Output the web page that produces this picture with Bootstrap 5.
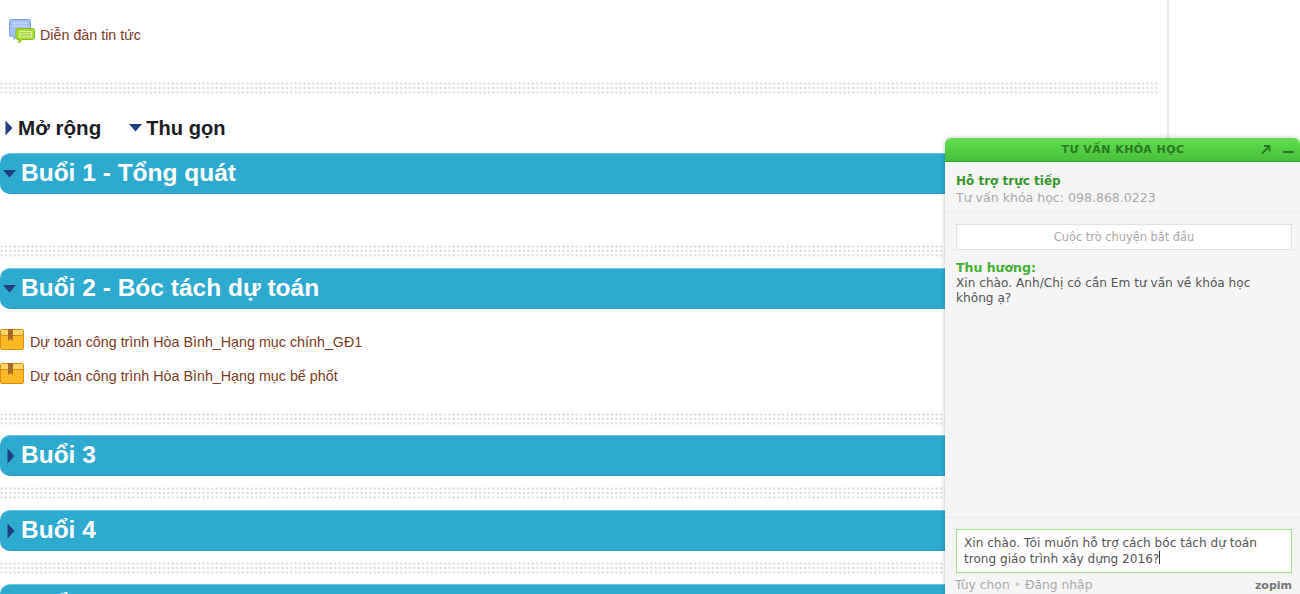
<!DOCTYPE html>
<html lang="vi">
<head>
<meta charset="UTF-8">
<title>Khóa học</title>
<link href="https://cdn.jsdelivr.net/npm/bootstrap@5.3.2/dist/css/bootstrap.min.css" rel="stylesheet">
<style>
html, body { height: 594px; overflow: hidden; }
body { font-family: "Liberation Sans", Arial, sans-serif; background: #fff; }
.page-main { width: 1169px; height: 594px; border-right: 2px solid #e8e8e8; padding-right: 9px; overflow: hidden; }
.res-link { color: #7c3a26; font-size: 14.3px; line-height: 20px; text-decoration: none; }
.forum-row { height: 82px; padding: 18px 0 0 9px; }
.forum-link { margin: 7px 0 0 5px; }
.dots { height: 12px; background-image: radial-gradient(circle at 1.5px 1.5px, #dcdcdc 1px, transparent 1.3px); background-size: 4.4px 4.4px; }
.toggle-row { height: 59px; padding-top: 9px; padding-left: 5px; gap: 28px; }
.toggle-item { font-size: 20.6px; font-weight: 700; color: #1c1c24; line-height: 24px; gap: 5px; }
.toggle-row > .toggle-item + .toggle-item { gap: 4px; font-size: 20.1px; }
.sec-bar { height: 41px; background: #2eaad1; border-top: 1px solid #6cc3de; border-bottom: 1px solid #2a9fc6; border-radius: 10px 0 0 10px; color: #fff; font-size: 24.5px; font-weight: 700; line-height: 38px; padding-left: 3px; gap: 5px; }
.gap-51 { height: 51px; }
.gap-11 { height: 11px; }
.gap-10 { height: 10px; }
.res-list { height: 104px; padding-top: 16px; }
.res-item { height: 34px; gap: 6px; }
.res-item svg { margin-top: -6px; }
.arrow-slot { width: 13px; flex-shrink: 0; }
.chat-box { position: absolute; left: 945px; top: 138px; width: 355px; height: 470px; background: #f5f5f5; border-top-left-radius: 6px; border-top-right-radius: 6px; box-shadow: 0 0 5px rgba(0,0,0,.25); font-family: "DejaVu Sans", Verdana, sans-serif; font-size: 12.1px; }
.chat-head { height: 24px; background: linear-gradient(#5fdf4e, #48bf3a); border-bottom: 1px solid #3fa833; border-top-left-radius: 6px; border-top-right-radius: 6px; color: #2b7a22; font-size: 11px; font-weight: 700; letter-spacing: .45px; line-height: 24px; padding-left: 1px; }
.chat-icons { position: absolute; right: 6px; top: 6px; gap: 12px; }
.chat-agent { height: 51px; padding: 11px 11px 0; border-bottom: 1px solid #ebebeb; line-height: 17px; }
.agent-name { color: #3a962c; font-weight: 700; font-size: 12px; line-height: 16px; }
.agent-sub { color: #aaa; font-size: 12.55px; }
.chat-log { height: 305px; padding: 11px 8px 0 11px; border-bottom: 1px solid #ebebeb; }
.start-note { height: 26px; background: #fff; border: 1px solid #e2e2e2; text-align: center; color: #aaa; font-size: 11.4px; line-height: 24px; margin-bottom: 10px; }
.msg-from { color: #45b036; font-weight: 700; font-size: 12.5px; line-height: 16px; }
.msg-text { color: #555; font-size: 12.15px; line-height: 15px; padding-right: 22px; }
.chat-input { margin: 11px 8px 0 11px; height: 44px; background: #fff; border: 1px solid #9fe58f; padding: 6px 7px; color: #555; line-height: 15px; }
.caret-mark { display: inline-block; width: 1px; height: 13px; background: #333; vertical-align: -1px; }
.chat-foot { height: 20px; padding: 5px 8px 0 10px; color: #aaa; font-size: 12.3px; line-height: 15px; }
.foot-dot { color: #ccc; padding: 0 4px; }
.zopim-mark { color: #777; font-weight: 700; font-size: 11px; }
</style>
</head>
<body>

<div class="page-main">
    <div class="forum-row d-flex align-items-start">
        <svg width="26" height="26" viewBox="0 0 26 26" class="flex-shrink-0">
            <path d="M2.5 1.5h17a2 2 0 0 1 2 2v13a2 2 0 0 1-2 2H8l-3 3v-3H2.500a2 2 0 0 1-2-2v-13a2 2 0 0 1 2-2z" fill="#a5c0f5" stroke="#7c9fe6"/>
            <path d="M3.5 5h15M3.5 8h15" stroke="#d0def9"/>
            <path d="M9 10.500h14.500a2 2 0 0 1 2 2v7a2 2 0 0 1-2 2H13l-3 3.500v-3.500H9a2 2 0 0 1-2-2v-7a2 2 0 0 1 2-2z" fill="#a9dc2e" stroke="#86bd1c"/>
            <rect x="10" y="13" width="13" height="6.500" fill="#dcf29a"/>
            <path d="M11 14.500h11M11 16.300h11M11 18h11" stroke="#97c72f" stroke-width=".8"/>
        </svg>
        <a href="#" class="res-link forum-link">Diễn đàn tin tức</a>
    </div>
    <div class="dots"></div>

    <div class="toggle-row d-flex">
        <div class="toggle-item d-flex align-items-center">
            <svg width="8" height="16" viewBox="0 0 8 16"><path d="M0.500 0.500 7.500 8 0.500 15.500z" fill="#1f3d7f"/></svg>
            Mở rộng
        </div>
        <div class="toggle-item d-flex align-items-center">
            <svg width="13" height="8" viewBox="0 0 13 8"><path d="M0 0h13L6.500 7.500z" fill="#1f3d7f"/></svg>
            Thu gọn
        </div>
    </div>

    <div class="sec-bar d-flex">
        <span class="arrow-slot d-flex align-items-center"><svg width="13" height="8" viewBox="0 0 13 8"><path d="M0 0h13L6.500 7.500z" fill="#1f3d7f"/></svg></span>
        Buổi 1 - Tổng quát
    </div>
    <div class="gap-51"></div>
    <div class="dots"></div>
    <div class="gap-11"></div>

    <div class="sec-bar d-flex">
        <span class="arrow-slot d-flex align-items-center"><svg width="13" height="8" viewBox="0 0 13 8"><path d="M0 0h13L6.500 7.500z" fill="#1f3d7f"/></svg></span>
        Buổi 2 - Bóc tách dự toán
    </div>
    <div class="res-list">
        <div class="res-item d-flex align-items-center">
            <svg width="24" height="21" viewBox="0 0 24 21"><rect x=".5" y=".5" width="23" height="20" rx="1.500" fill="#fbb924" stroke="#d98e10"/><path d="M1 1h22v5H1z" fill="#fdd468"/><path d="M1 6.500h22" stroke="#d98e10"/><path d="M8 0h5v12l-2.500-2L8 12z" fill="#a9682a"/></svg>
            <a href="#" class="res-link">Dự toán công trình Hòa Bình_Hạng mục chính_GĐ1</a>
        </div>
        <div class="res-item d-flex align-items-center">
            <svg width="24" height="21" viewBox="0 0 24 21"><rect x=".5" y=".5" width="23" height="20" rx="1.500" fill="#fbb924" stroke="#d98e10"/><path d="M1 1h22v5H1z" fill="#fdd468"/><path d="M1 6.500h22" stroke="#d98e10"/><path d="M8 0h5v12l-2.500-2L8 12z" fill="#a9682a"/></svg>
            <a href="#" class="res-link">Dự toán công trình Hòa Bình_Hạng mục bể phốt</a>
        </div>
    </div>
    <div class="dots"></div>
    <div class="gap-10"></div>

    <div class="sec-bar d-flex">
        <span class="arrow-slot d-flex align-items-center ps-1"><svg width="8" height="16" viewBox="0 0 8 16"><path d="M0.500 0.500 7.500 8 0.500 15.500z" fill="#1f3d7f"/></svg></span>
        Buổi 3
    </div>
    <div class="gap-11"></div>
    <div class="dots"></div>
    <div class="gap-11"></div>

    <div class="sec-bar d-flex">
        <span class="arrow-slot d-flex align-items-center ps-1"><svg width="8" height="16" viewBox="0 0 8 16"><path d="M0.500 0.500 7.500 8 0.500 15.500z" fill="#1f3d7f"/></svg></span>
        Buổi 4
    </div>
    <div class="gap-11"></div>
    <div class="dots"></div>
    <div class="gap-10"></div>

    <div class="sec-bar d-flex">
        <span class="arrow-slot d-flex align-items-center ps-1"><svg width="8" height="16" viewBox="0 0 8 16"><path d="M0.500 0.500 7.500 8 0.500 15.500z" fill="#1f3d7f"/></svg></span>
        Buổi 5
    </div>
</div>

<div class="chat-box">
    <div class="chat-head position-relative text-center">
        <span>TƯ VẤN KHÓA HỌC</span>
        <div class="chat-icons d-flex align-items-center">
            <svg width="11" height="11" viewBox="0 0 11 11"><path d="M2 9.500 8.500 3M4 2h5.500v5.500" fill="none" stroke="#2b7a22" stroke-width="1.800"/></svg>
            <svg width="11" height="11" viewBox="0 0 11 11"><path d="M0 8h11" stroke="#2b7a22" stroke-width="2"/></svg>
        </div>
    </div>
    <div class="chat-agent">
        <div class="agent-name">Hỗ trợ trực tiếp</div>
        <div class="agent-sub">Tư vấn khóa học: 098.868.0223</div>
    </div>
    <div class="chat-log">
        <div class="start-note">Cuộc trò chuyện bắt đầu</div>
        <div class="msg-from">Thu hương:</div>
        <div class="msg-text">Xin chào. Anh/Chị có cần Em tư vấn về khóa học không ạ?</div>
    </div>
    <div class="chat-input">Xin chào. Tôi muốn hỗ trợ cách bóc tách dự toán trong giáo trình xây dựng 2016?<span class="caret-mark"></span></div>
    <div class="chat-foot d-flex justify-content-between">
        <span>Tùy chọn<span class="foot-dot">•</span>Đăng nhập</span>
        <span class="zopim-mark">zopim</span>
    </div>
</div>

<script src="https://cdn.jsdelivr.net/npm/bootstrap@5.3.2/dist/js/bootstrap.bundle.min.js"></script>
</body>
</html>
